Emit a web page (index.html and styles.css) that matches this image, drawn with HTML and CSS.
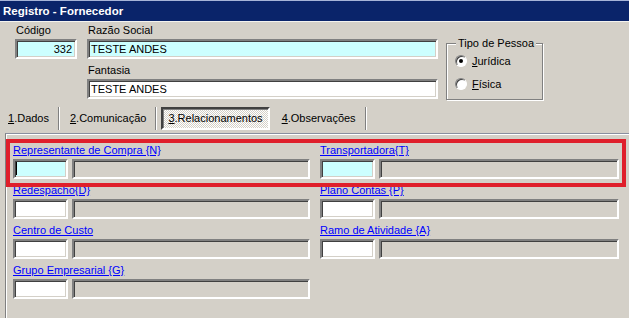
FILE: index.html
```html
<!DOCTYPE html>
<html lang="pt-br">
<head>
  <meta charset="UTF-8" />
  <title>Registro - Fornecedor</title>
  <link rel="stylesheet" href="styles.css">
</head>
<body>
  <div class="janela">
    <div class="titulo">Registro - Fornecedor</div>

    <div class="cabecalho">
      <div class="campo codigo">
        <label>Código</label>
        <div class="edit foco num">332</div>
      </div>
      <div class="campo razao">
        <label>Razão Social</label>
        <div class="edit foco">TESTE ANDES</div>
        <label class="espaco">Fantasia</label>
        <div class="edit">TESTE ANDES</div>
      </div>
      <fieldset class="grupo">
        <legend>Tipo de Pessoa</legend>
        <div class="radio"><span class="bola marcada"></span><span><u>J</u>urídica</span></div>
        <div class="radio"><span class="bola"></span><span><u>F</u>ísica</span></div>
      </fieldset>
    </div>

    <div class="abas">
      <div class="aba primeira"><u>1</u>.Dados</div>
      <div class="aba"><u>2</u>.Comunicação</div>
      <div class="aba ativa"><u>3</u>.Relacionamentos</div>
      <div class="aba"><u>4</u>.Observações</div>
    </div>

    <div class="pagina">
      <div class="grade">
        <div class="item">
          <a class="link">Representante de Compra {N}</a>
          <div class="linha">
            <div class="edit cod foco"><span class="cursor"></span></div>
            <div class="edit desc"></div>
          </div>
        </div>
        <div class="item">
          <a class="link">Transportadora{T}</a>
          <div class="linha">
            <div class="edit cod foco"></div>
            <div class="edit desc"></div>
          </div>
        </div>
        <div class="item">
          <a class="link">Redespacho{D}</a>
          <div class="linha">
            <div class="edit cod"></div>
            <div class="edit desc"></div>
          </div>
        </div>
        <div class="item">
          <a class="link">Plano Contas {P}</a>
          <div class="linha">
            <div class="edit cod"></div>
            <div class="edit desc"></div>
          </div>
        </div>
        <div class="item">
          <a class="link">Centro de Custo</a>
          <div class="linha">
            <div class="edit cod"></div>
            <div class="edit desc"></div>
          </div>
        </div>
        <div class="item">
          <a class="link">Ramo de Atividade {A}</a>
          <div class="linha">
            <div class="edit cod"></div>
            <div class="edit desc"></div>
          </div>
        </div>
        <div class="item">
          <a class="link">Grupo Empresarial {G}</a>
          <div class="linha">
            <div class="edit cod"></div>
            <div class="edit desc"></div>
          </div>
        </div>
      </div>
    </div>

    <div class="destaque"></div>
  </div>
</body>
</html>
```

FILE: styles.css
```css
body {
  margin: 0;
  font-family: "Liberation Sans", Arial, sans-serif;
  font-size: 11px;
  color: #000;
}
.janela {
  position: relative;
  width: 629px;
  height: 318px;
  overflow: hidden;
  background: #d4d0c8;
}
.titulo {
  box-sizing: border-box;
  height: 22px;
  line-height: 20px;
  padding-left: 3px;
  background: #0a246a;
  border-top: 1px solid #a6b4d8;
  border-bottom: 1px solid #f4f3ef;
  color: #fff;
  font-weight: bold;
  font-size: 11.5px;
}

/* cabecalho */
.cabecalho {
  display: flex;
  align-items: flex-start;
  padding: 1px 0 0 15px;
}
.campo {
  display: flex;
  flex-direction: column;
  gap: 2px;
}
.campo label { height: 14px; line-height: 14px; padding-left: 1px; }
.campo .espaco { margin-top: 2px; }
.codigo { width: 62px; }
.razao { width: 351px; margin-left: 10px; }

.edit {
  box-sizing: border-box;
  height: 20px;
  line-height: 16px;
  padding: 0 2px;
  background: #fff;
  border: 2px solid;
  border-color: #808080 #fff #fff #808080;
  box-shadow: inset 1px 1px #404040, inset -1px -1px #d4d0c8;
  white-space: nowrap;
}
.edit.foco { background: #ccffff; }
.edit.num { text-align: right; padding-right: 3px; }

.grupo {
  box-sizing: border-box;
  width: 97px;
  height: 63px;
  margin: 14px 0 0 8px;
  padding: 4px 0 0 8px;
  border: 1px solid #808080;
  box-shadow: inset 1px 1px #fff, 1px 1px #fff;
}
.grupo legend {
  padding: 0 2px;
  margin-left: 1px;
  line-height: 12px;
  background: #d4d0c8;
}
.radio {
  display: flex;
  align-items: center;
  gap: 5px;
  height: 23px;
  margin-top: -4px;
}
.radio + .radio { margin-top: 0; }
.bola {
  position: relative;
  box-sizing: border-box;
  width: 12px;
  height: 12px;
  border-radius: 50%;
  background: #fff;
  border: 1px solid;
  border-color: #808080 #fff #fff #808080;
  box-shadow: inset 1px 1px #404040;
}
.bola.marcada::after {
  content: "";
  position: absolute;
  left: 3px;
  top: 3px;
  width: 4px;
  height: 4px;
  border-radius: 50%;
  background: #000;
}

/* abas */
.abas {
  display: flex;
  height: 23px;
  margin-top: 7px;
}
.aba {
  padding: 0 9px 0 11px;
  line-height: 23px;
  border-right: 1px solid #808080;
  box-shadow: 1px 0 #fff;
  white-space: nowrap;
}
.aba.primeira { padding-left: 8px; }
.aba.ativa {
  box-sizing: border-box;
  height: 23px;
  line-height: 19px;
  margin: 0 1px 0 5px;
  padding: 0 5px;
  border: 2px solid;
  border-color: #404040 #fff #fff #404040;
  box-shadow: inset 1px 1px #808080;
  background: repeating-conic-gradient(#fff 0 25%, #d4d0c8 0 50%) 0 0 / 2px 2px;
}

/* pagina */
.pagina {
  margin: 3px 0 0 5px;
  padding: 9px 0 0 7px;
  height: 200px;
  border-top: 1px solid #8a8fa0;
  border-left: 1px solid #808080;
  box-shadow: inset 1px 1px #fff;
}
.grade {
  display: grid;
  grid-template-columns: 297px 299px;
  column-gap: 10px;
  row-gap: 4px;
}
.item {
  display: flex;
  flex-direction: column;
  gap: 2px;
}
.link {
  height: 14px;
  line-height: 14px;
  color: #0000ff;
  text-decoration: underline;
}
.linha {
  display: flex;
  gap: 4px;
}
.edit.cod { width: 55px; flex: none; position: relative; }
.edit.desc { flex: 1; background: #d4d0c8; }
.cursor {
  position: absolute;
  left: 1px;
  top: 1px;
  width: 1px;
  height: 13px;
  background: #000;
}

.destaque {
  position: absolute;
  left: 6px;
  top: 139px;
  width: 620px;
  height: 48px;
  box-sizing: border-box;
  border: 4px solid #df1f2b;
}
```
